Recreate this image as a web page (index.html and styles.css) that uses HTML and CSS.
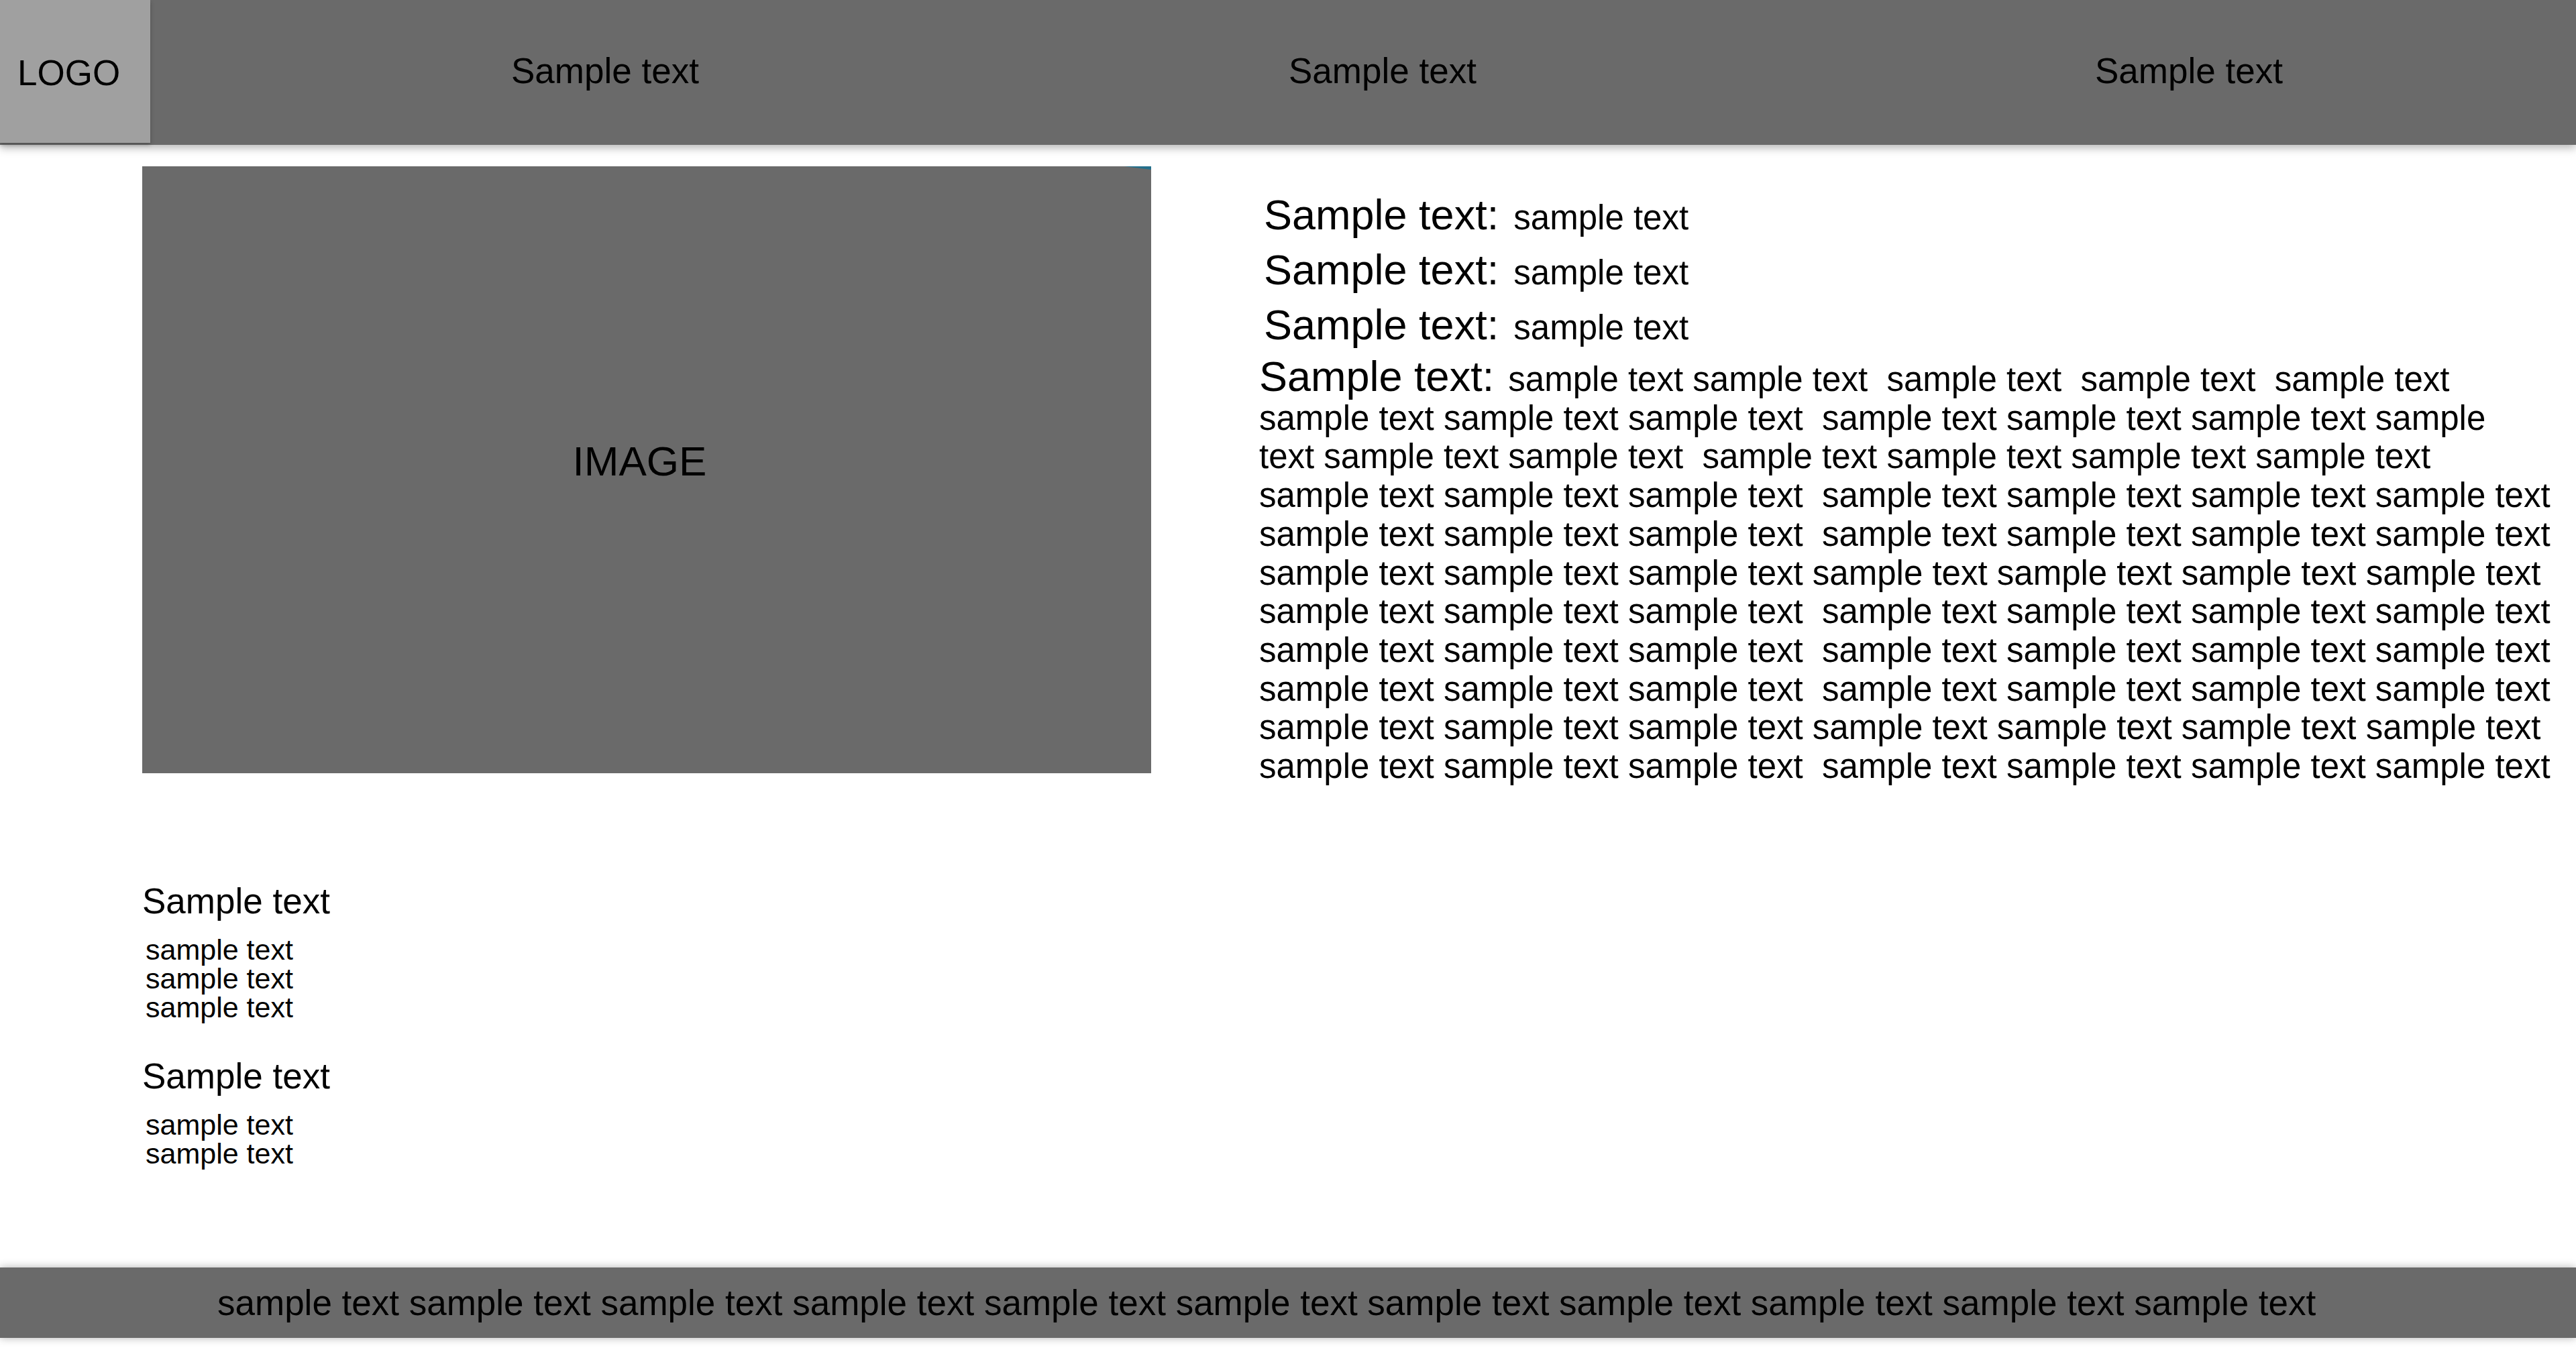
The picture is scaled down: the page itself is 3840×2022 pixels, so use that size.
FILE: index.html
```html
<!DOCTYPE html>
<html lang="en">
<head>
<meta charset="utf-8">
<title>Sample page</title>
<link rel="stylesheet" href="styles.css">
</head>
<body>
<header class="topbar">
  <div class="logo">LOGO</div>
  <nav class="nav">
    <a class="nav-item">Sample text</a>
    <a class="nav-item">Sample text</a>
    <a class="nav-item">Sample text</a>
  </nav>
</header>

<main class="main">
  <div class="left">
    <div class="image"><span>IMAGE</span></div>
    <section class="group group-first">
      <h2 class="group-title">Sample text</h2>
      <ul class="group-list">
        <li>sample text</li>
        <li>sample text</li>
        <li>sample text</li>
      </ul>
    </section>
    <section class="group">
      <h2 class="group-title">Sample text</h2>
      <ul class="group-list">
        <li>sample text</li>
        <li>sample text</li>
      </ul>
    </section>
  </div>

  <div class="right">
    <p class="fact"><span class="label">Sample text:</span> sample text</p>
    <p class="fact"><span class="label">Sample text:</span> sample text</p>
    <p class="fact"><span class="label">Sample text:</span> sample text</p>
    <p class="desc"><span class="label">Sample text:</span> sample text sample text&nbsp; sample text&nbsp; sample text&nbsp; sample text<br>
sample text sample text sample text&nbsp; sample text sample text sample text sample<br>
text sample text sample text&nbsp; sample text sample text sample text sample text<br>
sample text sample text sample text&nbsp; sample text sample text sample text sample text<br>
sample text sample text sample text&nbsp; sample text sample text sample text sample text<br>
sample text sample text sample text sample text sample text sample text sample text<br>
sample text sample text sample text&nbsp; sample text sample text sample text sample text<br>
sample text sample text sample text&nbsp; sample text sample text sample text sample text<br>
sample text sample text sample text&nbsp; sample text sample text sample text sample text<br>
sample text sample text sample text sample text sample text sample text sample text<br>
sample text sample text sample text&nbsp; sample text sample text sample text sample text</p>
  </div>
</main>

<footer class="footer">sample text sample text sample text sample text sample text sample text sample text sample text sample text sample text sample text</footer>
</body>
</html>
```

FILE: styles.css
```css
* {
  box-sizing: border-box;
}

html, body {
  margin: 0;
  padding: 0;
  background: #ffffff;
}

body {
  font-family: "Liberation Sans", Arial, Helvetica, sans-serif;
  color: #000000;
  min-height: 2022px;
}

/* ---------- header ---------- */
.topbar {
  display: flex;
  height: 216px;
  background: #6a6a6a;
  box-shadow: 0 5px 12px rgba(0, 0, 0, 0.28);
  position: relative;
  z-index: 2;
}

.logo {
  width: 224px;
  height: 213px;
  background: #a0a0a0;
  display: flex;
  align-items: center;
  padding-left: 26px;
  padding-top: 4px;
  font-size: 53px;
  box-shadow: 0 3px 6px rgba(0, 0, 0, 0.25);
}

.nav {
  flex: 1;
  display: grid;
  grid-template-columns: 1159px 1202px auto;
  align-items: center;
  padding-left: 538px;
  padding-bottom: 5px;
}

.nav-item {
  font-size: 53px;
  color: #000000;
  text-decoration: none;
}

/* ---------- main ---------- */
.main {
  display: grid;
  grid-template-columns: 1504px 1fr;
  column-gap: 161px;
  padding-left: 212px;
  margin-top: 32px;
}

.image {
  position: relative;
  height: 905px;
  background: #6a6a6a;
  display: flex;
  align-items: center;
  justify-content: center;
  padding-right: 21px;
  padding-bottom: 26px;
  font-size: 62px;
}

.image::after {
  content: "";
  position: absolute;
  top: 0;
  right: 0;
  width: 40px;
  height: 5px;
  background: #24708c;
  clip-path: polygon(0 0, 100% 0, 100% 100%);
}

.group {
  margin-top: 50px;
}

.group-first {
  margin-top: 160px;
}

.group-title {
  margin: 0;
  font-size: 53px;
  font-weight: normal;
  line-height: normal;
}

.group-list {
  list-style: none;
  margin: 21px 0 0;
  padding: 0 0 0 5px;
  font-size: 43px;
  line-height: 43px;
}

/* ---------- right column ---------- */
.right {
  padding-top: 36px;
  white-space: nowrap;
}

.fact {
  margin: 0 0 10px;
  padding-left: 7px;
  font-size: 51px;
}

.label {
  font-size: 63px;
  margin-right: 8px;
}

.desc {
  margin: 13px 0 0;
  font-size: 51px;
  line-height: 57.7px;
}

.desc .label {
  margin-right: 7px;
}

/* ---------- footer ---------- */
.footer {
  margin-top: 148px;
  height: 105px;
  background: #6a6a6a;
  display: flex;
  align-items: center;
  padding-left: 324px;
  font-size: 53px;
  white-space: nowrap;
  box-shadow: 0 0 12px rgba(0, 0, 0, 0.3);
}
```
